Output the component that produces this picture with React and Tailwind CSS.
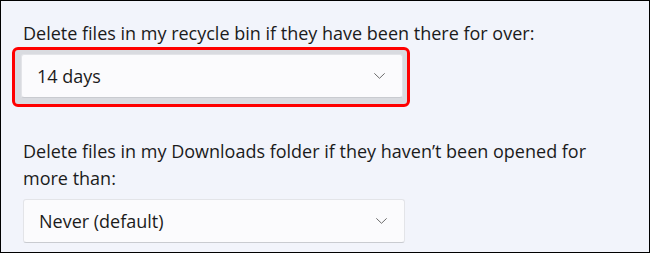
import React from 'react';

const Chevron = () => (
    <svg width="11" height="6" viewBox="0 0 11 6" fill="none" className="shrink-0">
        <path d="M0.6 0.6 L5.5 5.3 L10.4 0.6" stroke="#6b6b6b" strokeWidth="1" strokeLinecap="round" strokeLinejoin="round" />
    </svg>
);

const Dropdown = ({ value }) => (
    <div className="flex items-center justify-between w-[382px] h-[44px] pl-[15px] pr-[17px] bg-[#fbfbfd] border border-[#e3e4e8] border-b-[#c9cbd0] rounded-[3px]">
        <span className="text-[18px] text-[#1b1b1b]">{value}</span>
        <Chevron />
    </div>
);

export default function App() {
    return (
        <div
            className="w-[650px] h-[253px] border border-black bg-[#f2f4fb] overflow-hidden"
            style={{ fontFamily: '"Open Sans", "Noto Sans", sans-serif' }}
        >
            <div className="pl-[22px] pt-[19px]">
                <p className="text-[18px] leading-[27px] text-[#1b1b1b]">
                    Delete files in my recycle bin if they have been there for over:
                </p>

                {/* highlighted dropdown */}
                <div className="-ml-[11px] mt-[0px] w-[398px] border-[3px] border-[#ff0000] rounded-[6px] bg-[#d9dbe0] pl-[6px] pt-[4px] pb-[6px] pr-[4px]">
                    <Dropdown value="14 days" />
                </div>

                <p className="mt-[31px] w-[600px] text-[18px] leading-[27px] text-[#1b1b1b]">
                    Delete files in my Downloads folder if they haven’t been opened for more than:
                </p>

                <div className="mt-[7px]">
                    <Dropdown value="Never (default)" />
                </div>
            </div>
        </div>
    );
}
